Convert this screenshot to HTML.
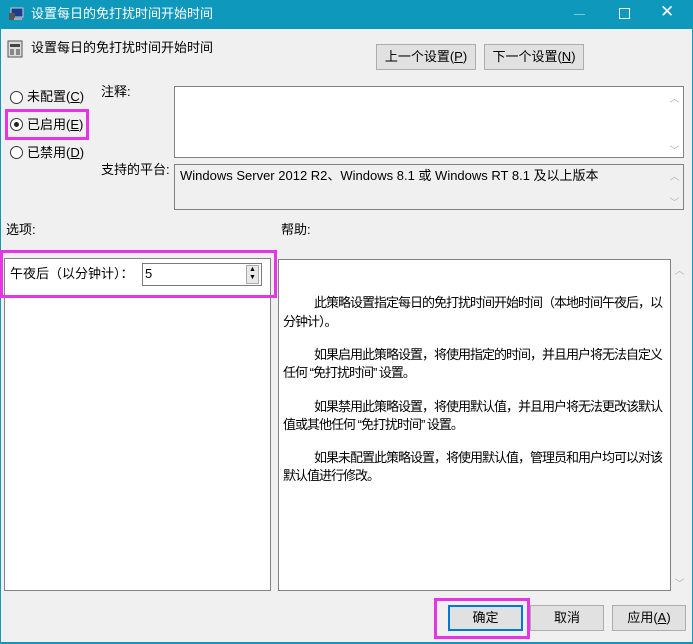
<!DOCTYPE html><html><head><meta charset="utf-8"><style>
*{margin:0;padding:0;box-sizing:border-box}
body{width:693px;height:644px;background:#f0f0f0;font-family:"Liberation Sans","Microsoft YaHei","Noto Sans CJK SC",sans-serif;font-size:13px;color:#000;position:relative;overflow:hidden}
.a{position:absolute;white-space:nowrap;line-height:16px}
.h{letter-spacing:-1px}
.btn{position:absolute;background:#e1e1e1;border:1px solid #adadad;text-align:center;line-height:24px}
.rad{position:absolute;width:13px;height:13px;border:1px solid #333;border-radius:50%;background:#fff}
.mag{position:absolute;border:3px solid #e535e5}
.box{position:absolute;border:1px solid #828282;background:#fff}
.sb{position:absolute;color:#b0b0b0;font-size:10px;text-align:center;width:17px}
u{text-decoration:underline}
</style></head><body>
<div style="position:absolute;left:0;top:0;width:693px;height:29px;background:#0e98bc"></div>
<div style="position:absolute;left:0;top:29px;width:1px;height:615px;background:#0e98bc"></div>
<div style="position:absolute;right:0;top:29px;width:1px;height:615px;background:#0e98bc"></div>
<div style="position:absolute;left:0;top:642px;width:693px;height:2px;background:#0e98bc"></div>
<svg style="position:absolute;left:8px;top:7px" width="16" height="14"><rect x="3" y="1" width="12" height="9" fill="#1c3d8f" stroke="#ccc"/><rect x="1" y="6" width="6" height="7" fill="#555"/><rect x="6" y="11" width="8" height="2" fill="#aaa"/></svg>
<div class="a" style="left:31px;top:6px;color:#fff">设置每日的免打扰时间开始时间</div>
<div style="position:absolute;left:574px;top:14px;width:11px;height:1px;background:#7fc9dc"></div>
<div style="position:absolute;left:619px;top:8px;width:11px;height:11px;border:1px solid #fff"></div>
<div class="a" style="left:660px;top:4px;color:#fff;font-size:17px">✕</div>
<svg style="position:absolute;left:7px;top:40px" width="16" height="18"><rect x="1" y="1" width="14" height="16" fill="#ddd" stroke="#555"/><rect x="3" y="4" width="10" height="3" fill="#444"/><rect x="3" y="9" width="4" height="6" fill="#888"/><rect x="9" y="9" width="4" height="6" fill="#888"/></svg>
<div class="a" style="left:31px;top:40px">设置每日的免打扰时间开始时间</div>
<div class="btn" style="left:376px;top:44px;width:100px;height:26px">上一个设置(<u>P</u>)</div>
<div class="btn" style="left:484px;top:44px;width:100px;height:26px">下一个设置(<u>N</u>)</div>
<div class="rad" style="left:10px;top:91px"></div><div class="a" style="left:27px;top:89px">未配置(<u>C</u>)</div>
<div class="rad" style="left:10px;top:118px"></div><div style="position:absolute;left:14px;top:122px;width:5px;height:5px;border-radius:50%;background:#222"></div><div class="a" style="left:27px;top:117px">已启用(<u>E</u>)</div>
<div class="rad" style="left:10px;top:146px"></div><div class="a" style="left:27px;top:145px">已禁用(<u>D</u>)</div>
<div class="mag" style="left:5px;top:109px;width:84px;height:31px"></div>
<div class="a" style="left:101px;top:84px">注释:</div>
<div class="box" style="left:174px;top:86px;width:510px;height:72px"></div>
<div class="sb" style="left:666px;top:90px">︿</div><div class="sb" style="left:666px;top:142px">﹀</div>
<div class="a" style="left:101px;top:162px">支持的平台:</div>
<div class="box" style="left:174px;top:164px;width:510px;height:46px;background:#f0f0f0"></div>
<div class="a" style="left:180px;top:168px">Windows Server 2012 R2、Windows 8.1 或 Windows RT 8.1 及以上版本</div>
<div class="sb" style="left:666px;top:168px">︿</div><div class="sb" style="left:666px;top:194px">﹀</div>
<div class="a" style="left:6px;top:222px">选项:</div>
<div class="a" style="left:281px;top:222px">帮助:</div>
<div class="box" style="left:4px;top:258px;width:267px;height:333px"></div>
<div class="box" style="left:142px;top:263px;width:120px;height:23px;border-color:#7a7a7a"></div>
<div class="a" style="left:145px;top:266px">5</div>
<div style="position:absolute;left:246px;top:265px;width:13px;height:19px;border:1px solid #acacac;background:#e8e8e8;font-size:7px;line-height:8px;text-align:center">▲<br>▼</div>
<div class="a" style="left:10px;top:266px">午夜后（以分钟计）：</div>
<div class="mag" style="left:0px;top:250px;width:277px;height:48px"></div>
<div class="box" style="left:278px;top:259px;width:393px;height:332px"></div>
<div class="sb" style="left:671px;top:262px">︿</div><div class="sb" style="left:671px;top:575px">﹀</div>
<div class="a h" style="left:314px;top:295px">此策略设置指定每日的免打扰时间开始时间（本地时间午夜后，以</div>
<div class="a h" style="left:283px;top:314px">分钟计）。</div>
<div class="a h" style="left:314px;top:347px">如果启用此策略设置，将使用指定的时间，并且用户将无法自定义</div>
<div class="a h" style="left:283px;top:365px">任何 “免打扰时间” 设置。</div>
<div class="a h" style="left:314px;top:399px">如果禁用此策略设置，将使用默认值，并且用户将无法更改该默认</div>
<div class="a h" style="left:283px;top:417px">值或其他任何 “免打扰时间” 设置。</div>
<div class="a h" style="left:314px;top:450px">如果未配置此策略设置，将使用默认值，管理员和用户均可以对该</div>
<div class="a h" style="left:283px;top:468px">默认值进行修改。</div>
<div class="btn" style="left:448px;top:605px;width:75px;height:26px;border:2px solid #0078d7;line-height:22px">确定</div>
<div class="btn" style="left:530px;top:605px;width:74px;height:26px">取消</div>
<div class="btn" style="left:612px;top:605px;width:74px;height:26px">应用(<u>A</u>)</div>
<div class="mag" style="left:434px;top:598px;width:96px;height:41px"></div>
</body></html>
